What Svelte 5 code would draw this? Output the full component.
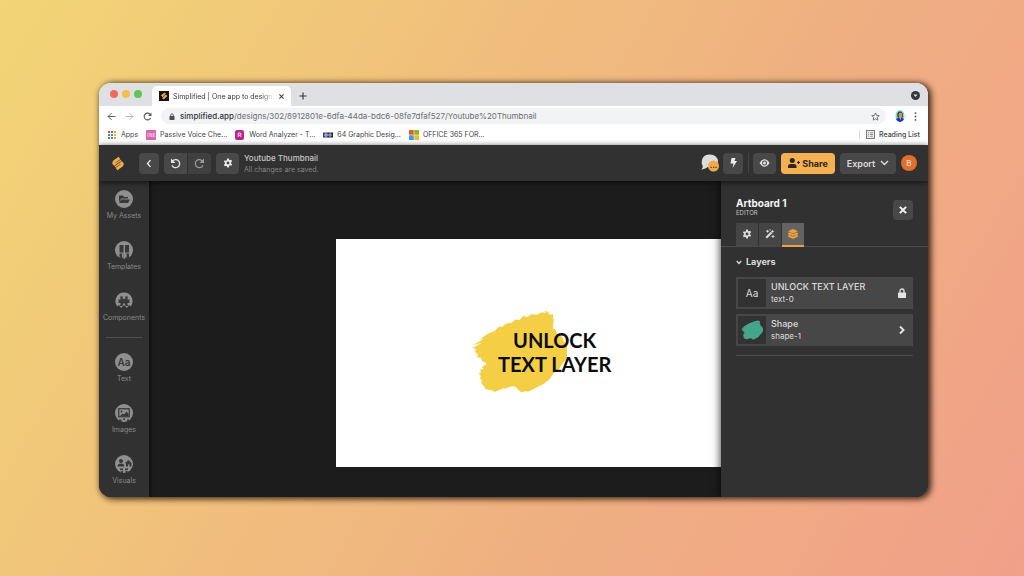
<script lang="ts">
  const bookmarks = [
    { icon: "apps", label: "Apps" },
    { icon: "ink", label: "Passive Voice Che..." },
    { icon: "word", label: "Word Analyzer - T..." },
    { icon: "graphic", label: "64 Graphic Desig..." },
    { icon: "office", label: "OFFICE 365 FOR..." },
  ];

  const tools = [
    { id: "assets", label: "My Assets" },
    { id: "templates", label: "Templates" },
    { id: "components", label: "Components" },
    { id: "text", label: "Text" },
    { id: "images", label: "Images" },
    { id: "visuals", label: "Visuals" },
  ];

  const layers = [
    { id: "text-0", name: "UNLOCK TEXT LAYER", kind: "text" },
    { id: "shape-1", name: "Shape", kind: "shape" },
  ];

  const appDots = ["#e8473f", "#e8473f", "#f0a030", "#3f9c52", "#4385f0", "#f0b428", "#3f9c52", "#4385f0", "#e8a030"];

  const gearPath =
    "M10 1h4l.7 3.2 2 1.1 3.1-1 2 3.5-2.4 2.2v2.9l2.4 2.2-2 3.5-3.1-1-2 1.1L14 23h-4l-.7-3.3-2-1.1-3.1 1-2-3.5 2.4-2.2V11L2.200 8.800l2-3.500 3.100 1 2-1.100zM12 8.500a3.500 3.500 0 1 0 0 7 3.500 3.500 0 0 0 0-7z";

  let activeTab = $state("layers");
  let layersOpen = $state(true);
</script>

{#snippet brush(color: string)}
  <svg class="brush" viewBox="38 30 290 252" preserveAspectRatio="none" aria-hidden="true">
    <path
      fill={color}
      d="M40 147l34-20-26 8 32-20-14 4 24-17 21-9 14-14 10 1 12-10 15-2 14-10 9 3 12-13 13 3 10-8 16 1 17-7 11 3-3-8 9 3 5 9 12-1-2 12 3 3-3 27 8 3 4 13 16 10 5 14 11 6 3 12-1 20-8 16-7 8-13 20-16 13-12 18-18 13-23 12-21 11-11-1-10 4-8-6-11-12-10-1-12 4-13 6 4-6-18 8-12 5-10-5-17-3-6-10-8-7 3-9-7-7 4-6-7-8 8-5-5-6 12-3-6-6 14-7-2-5-10-4-5-11-12-2 4-8-10-8 4-8-11-5 8-6z"
    />
  </svg>
{/snippet}

<div class="page">
  <div class="window">
    <div class="tab-strip">
      <div class="lights">
        <span class="light red"></span>
        <span class="light yellow"></span>
        <span class="light green"></span>
      </div>
      <div class="browser-tab">
        <svg class="favicon" viewBox="0 0 20 20" aria-hidden="true">
          <rect width="20" height="20" fill="#15110a" />
          <path d="M5 9l6-5 2 2-6 5zM7 14l7-6 2 2-7 6zM4 8l8 7M8 5l8 6" fill="#f0a848" stroke="#f0a848" stroke-width="1.500" />
        </svg>
        <span class="tab-title">Simplified | One app to design, </span>
        <button class="plain" aria-label="Close tab">
          <svg width="7" height="7" viewBox="0 0 10 10"><path d="M2 2l6 6M8 2l-6 6" stroke="#44474b" stroke-width="1.600" /></svg>
        </button>
      </div>
      <button class="plain new-tab" aria-label="New tab">
        <svg width="8" height="8" viewBox="0 0 10 10"><path d="M5 0.500v9M.5 5h9" stroke="#3c4043" stroke-width="1.500" /></svg>
      </button>
      <button class="plain tab-search" aria-label="Search tabs">
        <svg width="9" height="9" viewBox="0 0 18 18"><circle cx="9" cy="9" r="9" fill="#34363a" /><path d="M5 7h8l-4 5z" fill="#e6e8ea" /></svg>
      </button>
    </div>

    <div class="toolbar">
      <button class="plain" aria-label="Back">
        <svg width="9" height="9" viewBox="0 0 16 16"><path d="M15 8H2M8 2L2 8l6 6" fill="none" stroke="#54575b" stroke-width="1.700" /></svg>
      </button>
      <button class="plain" aria-label="Forward">
        <svg width="9" height="9" viewBox="0 0 16 16"><path d="M1 8h13M8 2l6 6-6 6" fill="none" stroke="#b4b7ba" stroke-width="1.700" /></svg>
      </button>
      <button class="plain" aria-label="Reload">
        <svg width="9" height="9" viewBox="0 0 16 16"><path d="M13.500 10.500A6 6 0 1 1 12.500 4" fill="none" stroke="#505357" stroke-width="1.900" /><path d="M15 1v6H9z" fill="#505357" /></svg>
      </button>
      <div class="address">
        <svg width="6" height="7" viewBox="0 0 12 14" aria-hidden="true"><rect x="1" y="6" width="10" height="8" rx="1" fill="#4c4f53" /><path d="M3.500 7V4a2.500 2.500 0 0 1 5 0v3" fill="none" stroke="#4c4f53" stroke-width="1.600" /></svg>
        <span class="url"><b>simplified.app</b>/designs/302/8912801e-6dfa-44da-bdc6-08fe7dfaf527/Youtube%20Thumbnail</span>
        <button class="plain" aria-label="Bookmark this page">
          <svg width="9" height="9" viewBox="0 0 20 20"><path d="M10 2l2.400 5.500 6 .6-4.500 4 1.300 5.900L10 15l-5.200 3 1.300-5.900-4.500-4 6-.6z" fill="none" stroke="#505357" stroke-width="1.700" /></svg>
        </button>
      </div>
      <svg class="profile" viewBox="0 0 20 24" aria-hidden="true">
        <ellipse cx="10" cy="12" rx="9" ry="12" fill="#6fdce2" />
        <path d="M2 18q8-6 16 0-3 6-8 6t-8-6z" fill="#1a2ad0" />
        <path d="M5 14Q3 3 10 3t6 11l-3 2H8z" fill="#3b3440" />
        <ellipse cx="11" cy="10" rx="4" ry="5" fill="#c99a4a" />
        <path d="M8 14h5l-2 7z" fill="#d9a650" />
      </svg>
      <button class="plain" aria-label="Menu">
        <svg width="3" height="9" viewBox="0 0 4 12"><g fill="#505357"><circle cx="2" cy="1.500" r="1.200" /><circle cx="2" cy="6" r="1.200" /><circle cx="2" cy="10.500" r="1.200" /></g></svg>
      </button>
    </div>

    <nav class="bookmarks">
      {#each bookmarks as mark}
        <a href="#{mark.icon}">
          <svg width="10" height="10" viewBox="0 0 20 20" aria-hidden="true">
            {#if mark.icon === "apps"}
              {#each appDots as color, i}
                <rect x={2 + (i % 3) * 6} y={2 + Math.floor(i / 3) * 6} width="4" height="4" fill={color} />
              {/each}
            {:else if mark.icon === "ink"}
              <rect width="20" height="20" rx="1" fill="#dc67ae" />
              <path d="M4 6v8M8 14V6l4 8V6M15 6v8M19 6l-4 4 4 4" fill="none" stroke="#f8cfe6" stroke-width="1.500" />
            {:else if mark.icon === "word"}
              <rect width="18" height="20" rx="4" fill="#c0268a" />
              <path d="M6.500 14V6H10a2 2 0 0 1 0 4.500H7M10 10.500l2 3.500" fill="none" stroke="#f7dcec" stroke-width="2" />
            {:else if mark.icon === "graphic"}
              <rect y="5" width="10" height="10" fill="#2d3f94" />
              <rect x="10" y="5" width="10" height="10" fill="#20222c" />
              <circle cx="6" cy="10" r="2.500" fill="none" stroke="#fff" stroke-width="1.500" />
              <circle cx="14" cy="10" r="2.500" fill="none" stroke="#fff" stroke-width="1.500" />
            {:else}
              <rect width="9.500" height="9.500" fill="#ef5a2b" />
              <rect x="10.500" width="9.500" height="9.500" fill="#82b922" />
              <rect y="10.500" width="9.500" height="9.500" fill="#35a3ea" />
              <rect x="10.500" y="10.500" width="9.500" height="9.500" fill="#fbb91c" />
            {/if}
          </svg>
          {mark.label}
        </a>
      {/each}
      <a class="reading" href="#reading-list">
        <svg width="9" height="9" viewBox="0 0 18 18" aria-hidden="true"><rect x="1" y="1" width="16" height="16" fill="#eceded" stroke="#6b6e72" stroke-width="1.800" /><path d="M4 5.500h2M4 9h2M4 12.500h2M8 5.500h6M8 9h6M8 12.500h6" stroke="#6b6e72" stroke-width="1.400" /></svg>
        Reading List
      </a>
    </nav>

    <header class="app-header">
      <a class="logo" href="#home" aria-label="Home">
        <svg width="12" height="15" viewBox="0 0 24 30">
          <g fill="none" stroke="#f0a94b" stroke-width="6" stroke-linejoin="round">
            <path d="M15 4L5 11q-3 3 0 5l2 2 12-8" />
            <path d="M9 26l10-7q3-3 0-5l-2-2-12 8" />
          </g>
          <path d="M7 19L21 9M3 21l14-10" stroke="#313131" stroke-width="1" />
        </svg>
      </a>
      <button class="btn back" aria-label="Go back">
        <svg width="6" height="9" viewBox="0 0 8 12"><path d="M6 1.500L2 6l4 4.500" fill="none" stroke="#ececec" stroke-width="1.800" /></svg>
      </button>
      <div class="history">
        <button class="btn" aria-label="Undo">
          <svg width="11" height="11" viewBox="0 0 22 22"><path d="M5 6.500a8 8 0 1 1-1 8" fill="none" stroke="#e4e4e4" stroke-width="2.600" /><path d="M2 1v9h9z" fill="#e4e4e4" /></svg>
        </button>
        <button class="btn faded" aria-label="Redo">
          <svg width="11" height="11" viewBox="0 0 22 22"><path d="M17 6.500a8 8 0 1 0 1 8" fill="none" stroke="#9c9c9c" stroke-width="2.300" /><path d="M20 1v9h-9z" fill="#9c9c9c" /></svg>
        </button>
      </div>
      <button class="btn" aria-label="Design settings">
        <svg width="10" height="10" viewBox="0 0 24 24"><path d={gearPath} fill="#ececec" fill-rule="evenodd" /></svg>
      </button>
      <div class="design">
        <span class="design-name">Youtube Thumbnail</span>
        <span class="design-status">All changes are saved.</span>
      </div>

      <button class="plain chat" aria-label="Comments">
        <svg width="20" height="18" viewBox="0 0 40 36">
          <path d="M4 12C6 3 14 1 20 1c9 0 16 6 16 13s-6 13-15 13c-2 0-4 0-6-1-3 3-8 5-13 5 3-2 4-5 3-8C3 20 3 16 4 12z" fill="#dcdcdc" />
          <circle cx="27" cy="24" r="11" fill="#f0a94b" />
          <path d="M21 26.500h2.500M26 26.500h2.500M31 26.500h2.500" stroke="#4a3820" stroke-width="2.500" />
        </svg>
      </button>
      <button class="btn bolt" aria-label="Quick actions">
        <svg width="7" height="10" viewBox="0 0 14 20"><path d="M3 0h8L9 6h5L5 20l2-9H1z" fill="#ececec" /></svg>
      </button>
      <span class="separator"></span>
      <button class="btn" aria-label="Preview">
        <svg width="11" height="8" viewBox="0 0 22 16"><path d="M1 8q10-15 20 0-10 15-20 0z" fill="#e4e4e4" /><circle cx="11" cy="8" r="5" fill="#484848" /><circle cx="11" cy="8" r="3" fill="#e4e4e4" /></svg>
      </button>
      <button class="btn share">
        <svg width="12" height="10" viewBox="0 0 24 20" aria-hidden="true"><circle cx="8.500" cy="5" r="5" fill="#2c261d" /><path d="M0 20v-3q0-5 5-5h7q5 0 5 5v3z" fill="#2c261d" /><path d="M18 9h6M21 6v6" stroke="#2c261d" stroke-width="2.200" /></svg>
        Share
      </button>
      <button class="btn export">
        Export
        <svg width="9" height="6" viewBox="0 0 18 12" aria-hidden="true"><path d="M2 2l7 7 7-7" fill="none" stroke="#dcdcdc" stroke-width="2.800" /></svg>
      </button>
      <button class="avatar" aria-label="Account">B</button>
    </header>

    <div class="workspace">
      <nav class="sidebar">
        {#each tools as tool, i}
          {#if i === 3}
            <hr />
          {/if}
          <button class="tool">
            <svg width="18" height="18" viewBox="0 0 36 36" aria-hidden="true">
              {#if tool.id === "components"}
                <path d="M18 1a17 17 0 0 1 13 28l-3-3-4 6-6-6-6 6-4-6-3 3A17 17 0 0 1 18 1z" fill="#8f8f8f" />
                <path d="M7 15h4v-3l-1-3h6l-1 3 3 3 3-3-1-3h6l-1 3v3h4v7h-4v3l2 3h-6l-1-4-2-2-2 2-1 4H9l2-3v-3H7z" fill="#383838" />
              {:else}
                <circle cx="18" cy="18" r="18" fill="#8f8f8f" />
              {/if}
              {#if tool.id === "assets"}
                <path d="M8 11h8l2 3h8v3H12l-4 7zM12 19h18l-4 7H8z" fill="#383838" />
              {:else if tool.id === "templates"}
                <path d="M9 8h8v15H9zM20 8h8v15h-8zM9 25h8v11H9zM20 25h8v11h-8z" fill="#383838" />
                <path d="M14 25h3v8h-3zM20 25h3v8h-3z" fill="#8f8f8f" />
              {:else if tool.id === "text"}
                <text x="18" y="25" text-anchor="middle" font-size="20" font-weight="600" fill="#383838">Aa</text>
              {:else if tool.id === "images"}
                <rect x="7.500" y="9.500" width="21" height="16" fill="none" stroke="#383838" stroke-width="2.500" />
                <circle cx="13" cy="15" r="2" fill="#383838" />
                <path d="M10 24l5-5 3 2 5-6 4 5v4z" fill="#383838" />
                <path d="M8 31h5v5H8zM24 31h4v5h-4zM16 29h4v3h-4z" fill="#383838" />
              {:else if tool.id === "visuals"}
                <circle cx="12" cy="12" r="4" fill="#383838" />
                <path d="M5 23q0-6 7-6t6 6zM20 16l7-6 6 6v7h-4v-4h-3v4h-4v-6z" fill="#383838" />
                <path d="M10 27h6v3h-6zM20 27h6v3h-6zM11 33l5-2v5h-5zM21 31l5 2v3h-5z" fill="#383838" />
              {/if}
            </svg>
            {tool.label}
          </button>
        {/each}
      </nav>

      <main class="stage">
        <div class="artboard">
          <div class="paint">{@render brush("#f4cf45")}</div>
          <p class="headline">UNLOCK<br />TEXT LAYER</p>
        </div>
      </main>

      <aside class="panel">
        <div class="panel-head">
          <div>
            <h2>Artboard 1</h2>
            <p class="panel-kind">EDITOR</p>
          </div>
          <button class="btn close" aria-label="Close panel">
            <svg width="10" height="10" viewBox="0 0 16 16"><path d="M3 3l10 10M13 3l-10 10" stroke="#f4f4f4" stroke-width="3.200" /></svg>
          </button>
        </div>
        <div class="panel-tabs">
          <button class:active={activeTab === "settings"} aria-label="Settings" onclick={() => (activeTab = "settings")}>
            <svg width="10" height="10" viewBox="0 0 24 24"><path d={gearPath} fill="#dcdcdc" fill-rule="evenodd" /></svg>
          </button>
          <button class:active={activeTab === "effects"} aria-label="Effects" onclick={() => (activeTab = "effects")}>
            <svg width="10" height="10" viewBox="0 0 20 20"><path d="M1 16L15 2l3 3L4 19z" fill="#dcdcdc" /><path d="M12 5l3 3" stroke="#484848" stroke-width="1.500" /><path d="M5 2v5M2 4.500h6M10 0v3M16 12v6M13 15h6" stroke="#dcdcdc" stroke-width="1.800" /></svg>
          </button>
          <button class:active={activeTab === "layers"} aria-label="Layers" onclick={() => (activeTab = "layers")}>
            <svg width="10" height="10" viewBox="0 0 20 20"><g fill="#f0a03c"><path d="M10 0l10 4.500L10 9 0 4.500z" /><path d="M0 8l3-1 7 3 7-3 3 1v2.500L10 14 0 10.500z" /><path d="M0 13l3-1 7 3.500 7-3.500 3 1v2l-10 5-10-5z" /></g></svg>
          </button>
        </div>
        <div class="panel-body">
          <button class="section" aria-expanded={layersOpen} onclick={() => (layersOpen = !layersOpen)}>
            <svg width="6" height="5" viewBox="0 0 12 10" aria-hidden="true"><path d="M1.500 2L6 7l4.500-5" fill="none" stroke="#dcdcdc" stroke-width="2.500" /></svg>
            Layers
          </button>
          {#if layersOpen}
            <ul>
              {#each layers as layer (layer.id)}
                <li>
                  <button class="layer">
                    <span class="thumb">
                      {#if layer.kind === "text"}
                        Aa
                      {:else}
                        {@render brush("#45a58a")}
                      {/if}
                    </span>
                    <span class="layer-text">
                      <span class="layer-name">{layer.name}</span>
                      <span class="layer-id">{layer.id}</span>
                    </span>
                    {#if layer.kind === "text"}
                      <svg width="10" height="10" viewBox="0 0 18 20" aria-hidden="true"><rect x="1" y="9" width="16" height="11" rx="1.500" fill="#e4e4e4" /><path d="M5 10V6a4 4 0 0 1 8 0v4" fill="none" stroke="#e4e4e4" stroke-width="2.600" /></svg>
                    {:else}
                      <svg width="10" height="10" viewBox="0 0 20 20" aria-hidden="true"><path d="M6 3l7 7-7 7" fill="none" stroke="#e4e4e4" stroke-width="3.800" /></svg>
                    {/if}
                  </button>
                </li>
              {/each}
            </ul>
          {/if}
        </div>
      </aside>
    </div>
  </div>
</div>

<style>
  :global(body) {
    font-family: Inter, "Liberation Sans", sans-serif;
  }

  .page {
    box-sizing: border-box;
    min-height: 100vh;
    padding: 83px 96px 80px 99px;
    background: linear-gradient(120deg, #f2d575 0%, #efb081 62%, #f1a089 100%);
  }

  .window {
    border-radius: 12px;
    overflow: hidden;
    background: #ffffff;
    box-shadow: 2px 1px 6px 1px rgba(40, 20, 5, 0.9);
  }

  button {
    font-family: inherit;
    margin: 0;
    padding: 0;
    border: none;
    cursor: pointer;
  }

  a {
    color: inherit;
    text-decoration: none;
  }

  svg {
    display: block;
    flex: none;
  }

  .plain {
    display: flex;
    align-items: center;
    justify-content: center;
    background: none;
  }

  /* browser chrome */
  .tab-strip {
    display: flex;
    align-items: flex-end;
    height: 23px;
    background: #dee0e3;
  }

  .lights {
    display: flex;
    gap: 4px;
    align-self: center;
    padding: 0 10px 2px 11px;
  }

  .light {
    width: 8px;
    height: 8px;
    border-radius: 50%;
  }

  .red {
    background: #ee6a5f;
  }
  .yellow {
    background: #f5bd4f;
  }
  .green {
    background: #61c454;
  }

  .browser-tab {
    display: flex;
    align-items: center;
    gap: 4px;
    box-sizing: border-box;
    width: 139px;
    height: 20px;
    padding: 0 6px 0 7px;
    border-radius: 5px 5px 0 0;
    background: #ffffff;
  }

  .favicon {
    width: 10px;
    height: 10px;
  }

  .tab-title {
    flex: 1;
    overflow: hidden;
    white-space: nowrap;
    font-size: 7px;
    color: #35383c;
    mask-image: linear-gradient(to right, #000 88%, transparent);
  }

  .new-tab {
    height: 20px;
    margin-left: 8px;
  }

  .tab-search {
    align-self: center;
    margin: 2px 8px 0 auto;
  }

  .toolbar {
    display: flex;
    align-items: center;
    gap: 9px;
    height: 20px;
    padding: 0 11px 0 8px;
  }

  .address {
    display: flex;
    align-items: center;
    gap: 5px;
    flex: 1;
    height: 16px;
    padding: 0 6px 0 8px;
    border-radius: 8px;
    background: #f1f3f4;
  }

  .url {
    flex: 1;
    font-size: 8px;
    color: #6b6e72;
  }

  .url b {
    font-weight: 500;
    color: #2f3235;
  }

  .profile {
    width: 10px;
    height: 12px;
  }

  .bookmarks {
    display: flex;
    align-items: center;
    gap: 8px;
    height: 17px;
    padding: 0 8px 2px;
    font-size: 7px;
    color: #3f4246;
  }

  .bookmarks a {
    display: flex;
    align-items: center;
    gap: 4px;
    white-space: nowrap;
  }

  .bookmarks .reading {
    margin-left: auto;
    padding-left: 6px;
    border-left: 1px solid #d8dadc;
    font-weight: 500;
  }

  /* app header */
  .app-header {
    position: relative;
    z-index: 3;
    display: flex;
    align-items: center;
    gap: 5px;
    height: 36px;
    padding: 0 11px;
    background: #313131;
    box-shadow: 0 1px 6px rgba(0, 0, 0, 0.7);
  }

  .logo {
    margin: 0 10px 0 2px;
  }

  .btn {
    display: flex;
    align-items: center;
    justify-content: center;
    width: 23px;
    height: 21px;
    border-radius: 4px;
    background: #484848;
    color: #dcdcdc;
  }

  .back,
  .bolt {
    width: 20px;
  }

  .history {
    display: flex;
    gap: 1px;
  }

  .history .btn:first-child {
    border-radius: 4px 0 0 4px;
  }

  .history .btn:last-child {
    border-radius: 0 4px 4px 0;
  }

  .faded {
    background: #404040;
  }

  .design {
    display: flex;
    flex-direction: column;
    gap: 2px;
    padding-top: 2px;
    white-space: nowrap;
  }

  .design-name {
    font-size: 8px;
    line-height: 10px;
    font-weight: 500;
    color: #c8c8c8;
  }

  .design-status {
    font-size: 7px;
    line-height: 10px;
    color: #858585;
  }

  .chat {
    margin: 0 -2px 0 auto;
  }

  .separator {
    width: 1px;
    height: 20px;
    margin-right: -1px;
    background: #424242;
  }

  .share {
    gap: 2px;
    width: 54px;
    background: #f5b052;
    color: #2c261d;
    font-size: 9px;
    font-weight: 700;
  }

  .export {
    gap: 5px;
    width: 56px;
    font-size: 9px;
    font-weight: 600;
  }

  .avatar {
    width: 16px;
    height: 16px;
    border-radius: 50%;
    background: #e0702c;
    color: #f6d8c4;
    font-size: 8px;
    font-weight: 500;
  }

  /* workspace */
  .workspace {
    position: relative;
    display: flex;
    background: #1c1c1c;
  }

  .sidebar {
    position: relative;
    z-index: 1;
    display: flex;
    flex-direction: column;
    gap: 21px;
    width: 50px;
    padding: 9px 0 11px;
    background: #313131;
    box-shadow: 1px 0 5px rgba(0, 0, 0, 0.6);
  }

  .sidebar hr {
    width: 36px;
    height: 1px;
    margin: -6px auto;
    border: none;
    background: #505050;
  }

  .tool {
    display: flex;
    flex-direction: column;
    align-items: center;
    gap: 3px;
    background: none;
    color: #8a8a8a;
    font-size: 7px;
    line-height: 9px;
  }

  .stage {
    flex: 1;
    min-width: 0;
  }

  .artboard {
    position: relative;
    width: 52%;
    aspect-ratio: 16 / 9;
    margin: 58px auto 30px;
    background: #ffffff;
  }

  .paint {
    position: absolute;
    left: 33%;
    top: 31%;
    width: 24%;
    height: 37%;
  }

  .brush {
    width: 100%;
    height: 100%;
  }

  .headline {
    position: absolute;
    left: 34%;
    top: 39%;
    width: 40%;
    margin: 0;
    text-align: center;
    white-space: nowrap;
    font-family: Lato, "Liberation Sans", sans-serif;
    font-size: 20px;
    line-height: 24px;
    font-weight: 700;
    color: #0c0c0c;
  }

  .panel {
    position: absolute;
    top: 0;
    right: 0;
    bottom: 0;
    z-index: 2;
    width: 207px;
    background: #313131;
    box-shadow: -1px 0 8px rgba(0, 0, 0, 0.7);
  }

  .panel-head {
    display: flex;
    justify-content: space-between;
    padding: 16px 15px 0;
  }

  .panel-head .close {
    width: 20px;
    height: 20px;
    margin-top: 3px;
  }

  h2 {
    margin: 0;
    font-size: 10px;
    line-height: 12px;
    font-weight: 700;
    color: #f4f4f4;
  }

  .panel-kind {
    margin: 0;
    font-size: 6px;
    line-height: 8px;
    color: #c0c0c0;
  }

  .panel-tabs {
    display: flex;
    gap: 1px;
    margin-top: 3px;
    padding-left: 15px;
    border-bottom: 1px solid #4c4c4c;
  }

  .panel-tabs button {
    display: flex;
    align-items: center;
    justify-content: center;
    width: 22px;
    height: 24px;
    margin-bottom: -1px;
    border-bottom: 2px solid #484848;
    background: #454545;
  }

  .panel-tabs button.active {
    border-bottom-color: #f0a03c;
    background: #636363;
  }

  .panel-body {
    padding: 9px 15px 9px;
  }

  .section {
    display: flex;
    align-items: center;
    gap: 4px;
    background: none;
    color: #dcdcdc;
    font-size: 9px;
    line-height: 12px;
    font-weight: 700;
  }

  ul {
    display: flex;
    flex-direction: column;
    gap: 5px;
    margin: 9px 0 0;
    padding: 0 0 9px;
    border-bottom: 1px solid #4c4c4c;
    list-style: none;
  }

  .layer {
    display: flex;
    align-items: center;
    gap: 5px;
    width: 100%;
    height: 32px;
    padding: 0 6px 0 2px;
    background: #474747;
    text-align: left;
  }

  .thumb {
    display: flex;
    align-items: center;
    justify-content: center;
    box-sizing: border-box;
    width: 28px;
    height: 28px;
    padding: 3px;
    background: #323232;
    color: #dcdcdc;
    font-size: 10px;
  }

  .thumb .brush {
    width: 22px;
    height: 20px;
  }

  .layer-text {
    display: flex;
    flex-direction: column;
    flex: 1;
    white-space: nowrap;
    color: #dcdcdc;
    line-height: 12px;
  }

  .layer-name {
    font-size: 9px;
    font-weight: 500;
  }

  .layer-id {
    font-size: 8px;
  }
</style>
